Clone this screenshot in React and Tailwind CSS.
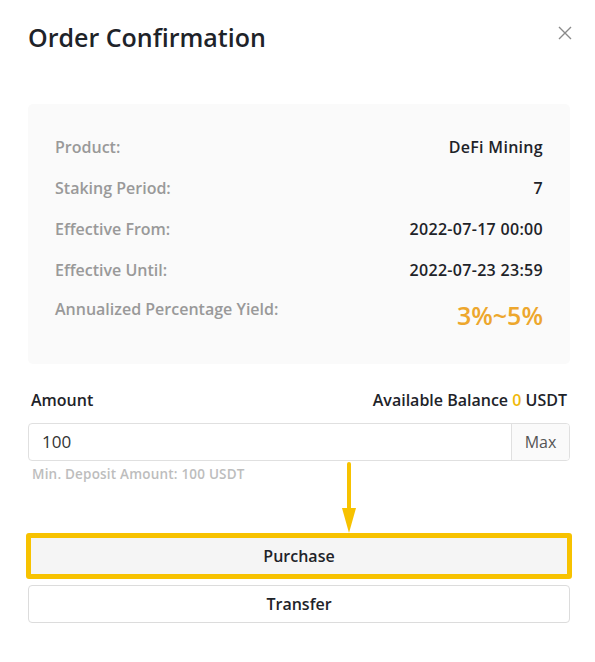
import React from "react";

const rows = [
  ["Product:", "DeFi Mining"],
  ["Staking Period:", "7"],
  ["Effective From:", "2022-07-17 00:00"],
  ["Effective Until:", "2022-07-23 23:59"],
];

export default function App() {
  return (
    <div
      className="w-[595px] h-[662px] bg-white relative"
      style={{ fontFamily: "'Open Sans', 'Liberation Sans', sans-serif" }}
    >
      <div className="pl-[28px] pr-[25px] pt-[21px]">
        <div className="flex items-start justify-between">
          <h1 className="text-[25px] leading-[32px] font-semibold text-[#1e2329]">
            Order Confirmation
          </h1>
          <svg
            width="16"
            height="16"
            viewBox="0 0 16 16"
            className="mt-[4px] mr-[-3px]"
          >
            <path d="M2 2 L14 14 M14 2 L2 14" stroke="#8a8a8a" strokeWidth="1.4" fill="none" />
          </svg>
        </div>

        <div className="mt-[51px] bg-[#fafafa] rounded-[5px] h-[260px] px-[27px] pt-[22px]">
          {rows.map(([k, v]) => (
            <div key={k} className="flex justify-between items-center h-[41px] text-[16px]">
              <span className="font-semibold text-[#999999]">{k}</span>
              <span className="font-semibold text-[#1e2329] tracking-[0.3px]">{v}</span>
            </div>
          ))}
          <div className="flex justify-between items-start pt-[8px]">
            <span className="font-semibold text-[16px] leading-[22px] text-[#999999]">
              Annualized Percentage Yield:
            </span>
            <span className="font-semibold text-[25px] leading-[30px] text-[#eda72d] mt-[2px]">
              3%~5%
            </span>
          </div>
        </div>

        <div className="mt-[25px] flex justify-between items-center px-[3px] text-[16px] leading-[22px] font-semibold text-[#1e2329]">
          <span>Amount</span>
          <span>
            Available Balance <span className="text-[#f0b90b]">0</span> USDT
          </span>
        </div>

        <div className="mt-[12px] flex h-[38px] border border-[#e0e0e0] rounded-[4px] overflow-hidden">
          <div className="flex-1 flex items-center pl-[13px] text-[17px] text-[#333]">100</div>
          <div className="w-[58px] flex items-center justify-center bg-[#fafafa] border-l border-[#e0e0e0] text-[16px] text-[#555]">
            Max
          </div>
        </div>

        <div className="mt-[4px] pl-[4px] text-[13.5px] leading-[18px] font-semibold text-[#bdbdbd] tracking-[0.2px]">
          Min. Deposit Amount: 100 USDT
        </div>

        <div className="mt-[50px] ml-[-2px] mr-[-2px] border-[5px] border-[#f7c200] rounded-[3px] bg-[#f5f5f5] h-[46px] flex items-center justify-center text-[16px] font-semibold text-[#1e2329]">
          Purchase
        </div>

        <div className="mt-[6px] h-[38px] border border-[#dcdcdc] rounded-[4px] flex items-center justify-center text-[16px] font-semibold text-[#1e2329]">
          Transfer
        </div>
      </div>

      <svg
        className="absolute left-[340px] top-[461px]"
        width="18"
        height="74"
        viewBox="0 0 18 74"
      >
        <path d="M9 3 L9 50" stroke="#f7c200" strokeWidth="4" strokeLinecap="round" />
        <path d="M2 47 L16 47 L9 72 Z" fill="#f7c200" />
      </svg>
    </div>
  );
}
